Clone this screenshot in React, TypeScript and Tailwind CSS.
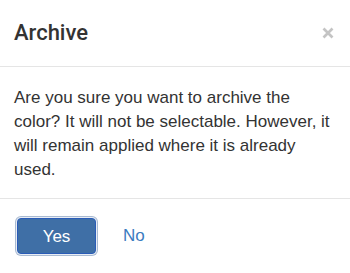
import React from "react";

export default function App() {
  return (
    <div className="w-[350px] h-[273px] bg-white overflow-hidden text-[#333333]" style={{ fontFamily: '"Liberation Sans", Arial, Helvetica, sans-serif' }}>
      <div className="h-[67px] border-b border-[#e5e5e5] flex items-center justify-between pl-[14px] pr-[16px]">
        <h4 className="text-[22px] font-medium leading-[24px] m-0" style={{ fontFamily: 'Roboto, "Liberation Sans", sans-serif' }}>Archive</h4>
        <button className="w-[12px] h-[12px] mb-[1px] flex items-center justify-center" aria-label="Close">
          <svg width="12" height="12" viewBox="0 0 12 12">
            <path d="M1.5 1.5 L10.5 10.5 M10.5 1.5 L1.5 10.5" stroke="#c4c4c4" strokeWidth="2.7" strokeLinecap="butt" />
          </svg>
        </button>
      </div>
      <div className="pl-[14px] pr-[14px] pt-[19px] h-[131px]">
        <p className="text-[17px] leading-[24px] m-0">
          Are you sure you want to archive the color? It will not be selectable. However, it will remain applied where it is already used.
        </p>
      </div>
      <div className="border-t border-[#e5e5e5] pt-[19px] pl-[17px] flex items-center gap-[27px]">
        <button className="w-[79px] h-[36px] rounded-[4px] bg-[#3f6fa6] border border-[#2a5cb8] text-white text-[17px] leading-none shadow-[0_0_0_1px_#e8edf4,0_0_0_2px_#a9bad2]">
          Yes
        </button>
        <span className="text-[17px] text-[#3b7bbf]">No</span>
      </div>
    </div>
  );
}
